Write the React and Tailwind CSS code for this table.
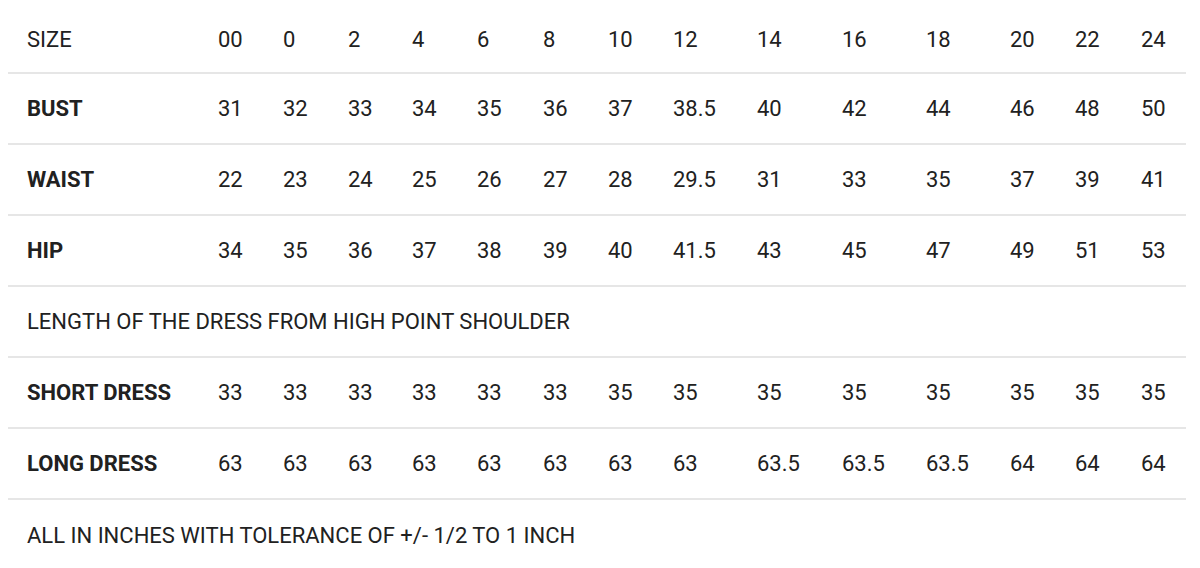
import React from "react";

const cols = "grid-cols-[191px_65px_65px_64px_65px_66px_65px_65px_84px_85px_84px_84px_65px_66px_64px]";

const rows = [
  { label: "SIZE", bold: false, values: ["00", "0", "2", "4", "6", "8", "10", "12", "14", "16", "18", "20", "22", "24"] },
  { label: "BUST", bold: true, values: ["31", "32", "33", "34", "35", "36", "37", "38.5", "40", "42", "44", "46", "48", "50"] },
  { label: "WAIST", bold: true, values: ["22", "23", "24", "25", "26", "27", "28", "29.5", "31", "33", "35", "37", "39", "41"] },
  { label: "HIP", bold: true, values: ["34", "35", "36", "37", "38", "39", "40", "41.5", "43", "45", "47", "49", "51", "53"] },
  { full: "LENGTH OF THE DRESS FROM HIGH POINT SHOULDER" },
  { label: "SHORT DRESS", bold: true, values: ["33", "33", "33", "33", "33", "33", "35", "35", "35", "35", "35", "35", "35", "35"] },
  { label: "LONG DRESS", bold: true, values: ["63", "63", "63", "63", "63", "63", "63", "63", "63.5", "63.5", "63.5", "64", "64", "64"] },
  { full: "ALL IN INCHES WITH TOLERANCE OF +/- 1/2 TO 1 INCH", last: true },
];

export default function App() {
  return (
    <div className="bg-white w-[1200px] h-[568px] overflow-hidden text-[#212121] text-[22px] font-['Roboto',sans-serif]">
      <div className="ml-[8px] w-[1178px] pt-[3px]">
        {rows.map((r, i) =>
          r.full ? (
            <div
              key={i}
              className={`h-[71px] flex items-center pl-[19px] ${r.last ? "" : "border-b-2 border-[#e6e6e6]"}`}
            >
              {r.full}
            </div>
          ) : (
            <div
              key={i}
              className={`grid ${cols} items-center border-b-2 border-[#e6e6e6] ${i === 0 ? "h-[71px] pt-[3px]" : "h-[71px]"}`}
            >
              <div className={`pl-[19px] ${r.bold ? "font-bold" : ""}`}>{r.label}</div>
              {r.values.map((v, j) => (
                <div key={j} className="pl-[19px]">{v}</div>
              ))}
            </div>
          )
        )}
      </div>
    </div>
  );
}
